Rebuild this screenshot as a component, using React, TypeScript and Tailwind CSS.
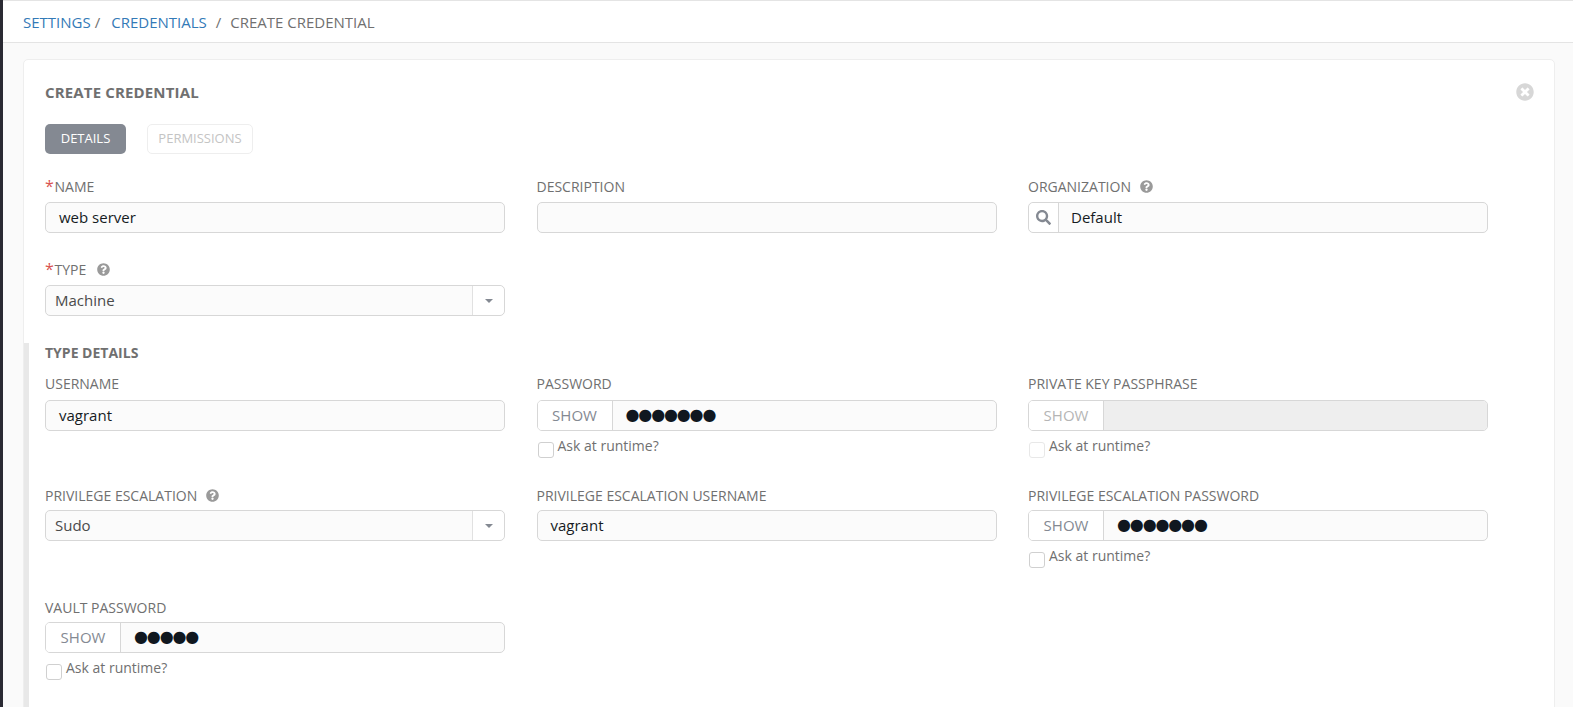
import React from 'react';
import { FaQuestionCircle, FaSearch, FaTimesCircle } from 'react-icons/fa';

function Label({ text, required, help, gap = 'mb-[6px]' }: { text: string; required?: boolean; help?: boolean; gap?: string }) {
  return (
    <div className={`flex items-center h-[19px] ${gap} text-[14px] leading-[19px] text-[#707070]`}>
      {required && <span className="w-[9.5px] text-[16px] text-[#d9534f]">*</span>}
      <span>{text}</span>
      {help && <FaQuestionCircle className={`${required ? 'ml-[11px]' : 'ml-[9px]'} w-[13px] h-[13px] text-[#9a9a9a]`} />}
    </div>
  );
}

function TextInput({ value }: { value?: string }) {
  return (
    <div className="h-[31px] pl-[13px] flex items-center bg-[#fbfbfb] border border-[#d7d7d7] rounded-[5px] text-[15px] text-[#161b1f]">
      {value}
    </div>
  );
}

function SelectBox({ value }: { value: string }) {
  return (
    <div className="h-[31px] flex items-center bg-[#fbfbfb] border border-[#d7d7d7] rounded-[5px] text-[15px] text-[#4a4a4a]">
      <span className="flex-1 pl-[9px]">{value}</span>
      <span className="w-[32px] h-full flex items-center justify-center border-l border-[#e1e1e1] bg-white rounded-r-[5px]">
        <span className="w-0 h-0 border-x-[4px] border-x-transparent border-t-[4px] border-t-[#848992]" />
      </span>
    </div>
  );
}

function SecretInput({ dots, disabled }: { dots?: number; disabled?: boolean }) {
  return (
    <div className="h-[31px] flex items-center bg-[#fbfbfb] border border-[#d7d7d7] rounded-[5px] overflow-hidden">
      <span className={`w-[75px] h-full flex items-center justify-center border-r border-[#d7d7d7] bg-white text-[15px] ${disabled ? 'text-[#b5b5b5]' : 'text-[#848992]'}`}>
        SHOW
      </span>
      <span className={`flex-1 h-full flex items-center pl-[13px] pb-[1px] text-[#10171f] text-[16px] tracking-[-1.14px] font-['DejaVu_Sans',sans-serif] ${disabled ? 'bg-[#eeeeee]' : ''}`}>
        {dots ? '●'.repeat(dots) : ''}
      </span>
    </div>
  );
}

function AskRuntime({ disabled }: { disabled?: boolean }) {
  return (
    <div className="flex items-start mt-[5px] ml-[1px] text-[14px] leading-[19px] text-[#707070]">
      <span className={`w-[16px] h-[16px] mt-[6px] bg-white border rounded-[3px] ${disabled ? 'border-[#e8e8e8]' : 'border-[#d0d0d0]'}`} />
      <span className="ml-[4px]">Ask at runtime?</span>
    </div>
  );
}

export default function App() {
  return (
    <div className="h-[707px] overflow-hidden flex bg-[#fafafa] font-['Open_Sans',sans-serif]">
      {/* dark sidebar edge */}
      <div className="w-[3px] bg-[#2a2a33]" />

      <div className="flex-1 min-w-0">
        {/* Breadcrumb */}
        <div className="h-[43px] pl-[20px] pt-[1px] flex items-center bg-white border-t border-b border-[#e4e4e4] text-[15px] text-[#707070]">
          <span className="text-[#337ab7]">SETTINGS</span>
          <span className="ml-[4px]">/</span>
          <span className="ml-[11px] text-[#337ab7]">CREDENTIALS</span>
          <span className="ml-[9px]">/</span>
          <span className="ml-[9px]">CREATE CREDENTIAL</span>
        </div>

        {/* Card */}
        <div className="relative mt-[16px] ml-[20px] w-[1532px] h-[700px] bg-white border border-[#eeeeee] rounded-[5px]">
          <button className="absolute top-[23px] right-[20px] text-[#d7d7d7]">
            <FaTimesCircle className="w-[18px] h-[18px]" />
          </button>

          <div className="pl-[21px] pt-[23px]">
            <div className="h-[19px] text-[15px] leading-[19px] tracking-[0.15px] font-bold text-[#707070]">CREATE CREDENTIAL</div>

            <div className="flex gap-[21px] mt-[22px]">
              <div className="w-[81px] h-[30px] flex items-center justify-center bg-[#848992] rounded-[5px] text-[13px] text-white">DETAILS</div>
              <div className="w-[106px] h-[30px] flex items-center justify-center bg-white border border-[#eeeeee] rounded-[5px] text-[13px] text-[#c4c4c4]">PERMISSIONS</div>
            </div>

            <div className="grid grid-cols-[460px_460px_460px] gap-x-[31.5px] mt-[23px]">
              <div>
                <Label text="NAME" required />
                <TextInput value="web server" />
              </div>
              <div>
                <Label text="DESCRIPTION" />
                <TextInput />
              </div>
              <div>
                <Label text="ORGANIZATION" help />
                <div className="h-[31px] flex items-center bg-[#fbfbfb] border border-[#d7d7d7] rounded-[5px] text-[15px] text-[#161b1f]">
                  <span className="w-[30px] h-full flex items-center justify-center border-r border-[#d7d7d7] bg-white rounded-l-[5px]">
                    <FaSearch className="w-[15px] h-[15px] text-[#848992]" />
                  </span>
                  <span className="pl-[12px]">Default</span>
                </div>
              </div>
            </div>

            <div className="grid grid-cols-[460px_460px_460px] gap-x-[31.5px] mt-[27px]">
              <div>
                <Label text="TYPE" required help />
                <SelectBox value="Machine" />
              </div>
            </div>
          </div>

          {/* Type details sub-panel */}
          <div className="mt-[27px] pl-[16px] border-l-[5px] border-[#e8e8e8] h-[400px]">
            <div className="h-[19px] text-[14px] leading-[19px] font-bold text-[#707070]">TYPE DETAILS</div>

            <div className="grid grid-cols-[460px_460px_460px] gap-x-[31.5px] mt-[12px]">
              <div>
                <Label text="USERNAME" gap="mb-[7px]" />
                <TextInput value="vagrant" />
              </div>
              <div>
                <Label text="PASSWORD" gap="mb-[7px]" />
                <SecretInput dots={7} />
                <AskRuntime />
              </div>
              <div>
                <Label text="PRIVATE KEY PASSPHRASE" gap="mb-[7px]" />
                <SecretInput disabled />
                <AskRuntime disabled />
              </div>
            </div>

            <div className="grid grid-cols-[460px_460px_460px] gap-x-[31.5px] mt-[28px]">
              <div>
                <Label text="PRIVILEGE ESCALATION" help gap="mb-[5px]" />
                <SelectBox value="Sudo" />
              </div>
              <div>
                <Label text="PRIVILEGE ESCALATION USERNAME" gap="mb-[5px]" />
                <TextInput value="vagrant" />
              </div>
              <div>
                <Label text="PRIVILEGE ESCALATION PASSWORD" gap="mb-[5px]" />
                <SecretInput dots={7} />
                <AskRuntime />
              </div>
            </div>

            <div className="grid grid-cols-[460px_460px_460px] gap-x-[31.5px] mt-[30px]">
              <div>
                <Label text="VAULT PASSWORD" gap="mb-[5px]" />
                <SecretInput dots={5} />
                <AskRuntime />
              </div>
            </div>
          </div>
        </div>
      </div>
    </div>
  );
}
